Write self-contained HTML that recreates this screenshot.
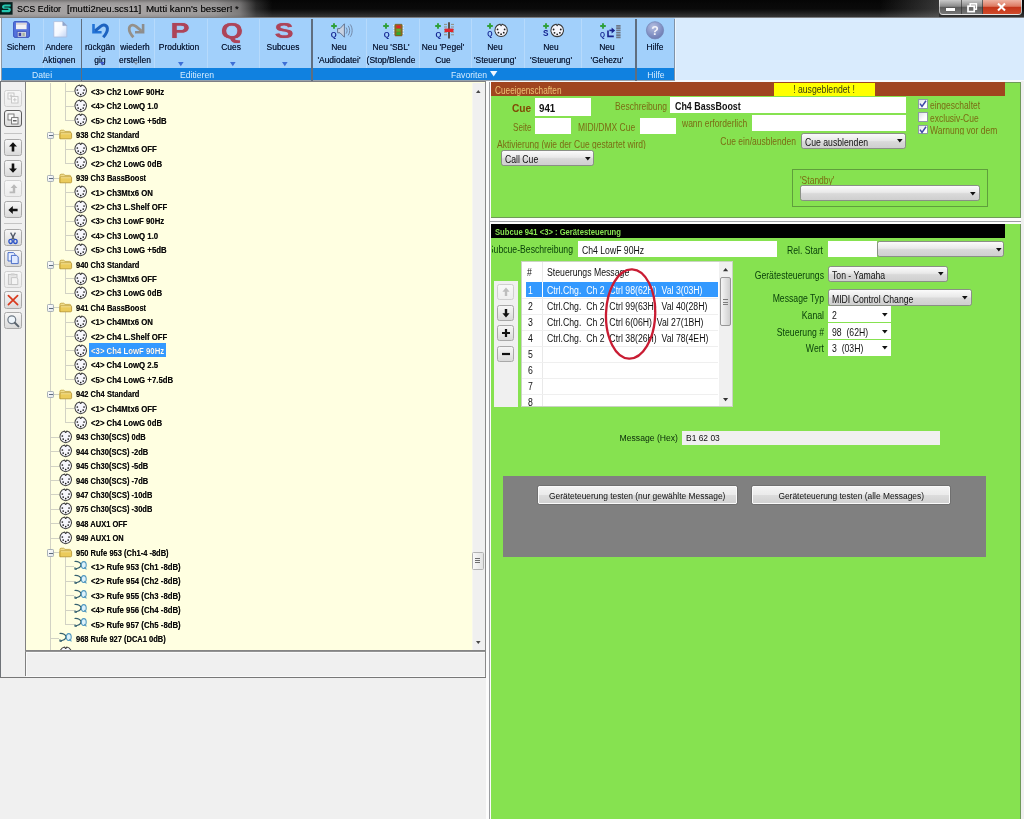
<!DOCTYPE html>
<html lang="de"><head><meta charset="utf-8"><title>SCS Editor</title>
<style>
html,body{margin:0;padding:0}
html{overflow:hidden;width:1024px;height:819px}
body{width:1024px;height:819px;position:relative;overflow:hidden;background:#f0f0f0;font-family:"Liberation Sans",sans-serif;font-size:9.6px;color:#000}
.a{position:absolute}
.t,.tc,.tr{font-size:10.2px}
.t{position:absolute;white-space:pre;transform:scaleX(0.85);transform-origin:0 0;line-height:1}
.tc{position:absolute;white-space:pre;transform:scaleX(0.85);transform-origin:50% 0;line-height:1;text-align:center}
.tr{position:absolute;white-space:pre;transform:scaleX(0.85);transform-origin:100% 0;line-height:1;text-align:right}
.b{font-weight:bold}
.tree{font-size:9.7px;font-weight:bold;color:#0a0a0a;transform:scaleX(.775);text-shadow:0 0 .5px rgba(0,0,0,.55)}
.rl{transform:scaleX(.88);font-size:9.6px;color:#0a1834;text-shadow:0 0 .45px rgba(10,24,52,.75)}
.band{transform:scaleX(.9);font-size:9.6px;color:#d4ecff}
.br{color:#7a6c14;transform:scaleX(.835);text-shadow:none}
.dg{color:#0a420a}
.sel{background:linear-gradient(#fbfbfb,#e9e9e9 45%,#d9d9d9 55%,#cfcfcf);border:1px solid #8a8f86;border-radius:2.5px;box-sizing:border-box}
.tbtn{position:absolute;left:4.2px;width:17.4px;height:17.2px;box-sizing:border-box;border:1px solid #a9a9a9;border-radius:2.5px;background:linear-gradient(#f6f6f6,#e9e9e9 50%,#dadada)}
.tbtn.dis{border-color:#d0d0d0;background:linear-gradient(#f7f7f7,#ececec)}
.lbtn{position:absolute;left:497.3px;width:17.2px;height:16.2px;box-sizing:border-box;border:1px solid #a9a9a9;border-radius:2.5px;background:linear-gradient(#f6f6f6,#e9e9e9 50%,#dadada)}
svg{position:absolute;overflow:visible}
#clip{position:absolute;left:0;top:0;width:1024px;height:819px;overflow:hidden}
#app{position:absolute;left:0;top:0;width:1024px;height:819px;will-change:transform;filter:blur(.4px)}
</style></head>
<body>
<div id="clip">
<div id="app">
<!-- title bar -->
<div class="a " style="left:-6px;top:-6px;width:1036px;height:831px;background:#f0f0f0"></div>
<div class="a " style="left:-6px;top:-6px;width:1036px;height:8px;background:#060606"></div>
<div class="a " style="left:-6px;top:0px;width:1036px;height:17.5px;background:linear-gradient(to bottom,#060606 0,#0a0a0a 9px,#222 13.5px,#3a3a3a 17px)"></div>
<div class="a " style="left:-6px;top:-6px;width:296px;height:23.5px;background:linear-gradient(to right,#a3a0a0 0,#a5a2a2 156px,#9a9898 221px,rgba(150,148,148,.78) 246px,rgba(120,120,120,.3) 262px,rgba(100,100,100,0) 278px)"></div>
<div class="a " style="left:-6px;top:-6px;width:1036px;height:6px;background:rgba(0,0,0,.28)"></div>
<div class="a " style="left:-6px;top:0px;width:1036px;height:17.5px;background:linear-gradient(to bottom,rgba(0,0,0,.28) 0,rgba(0,0,0,.05) 3px,rgba(0,0,0,0) 6px,rgba(0,0,0,0) 14px,rgba(0,0,0,.12) 17.5px)"></div>
<div class="a " style="left:-6px;top:16.6px;width:1036px;height:1.4px;background:#7d7f82"></div>
<svg class="a" style="left:0;top:2px" width="12.6" height="12.8" viewBox="0 0 16 16"><rect width="16" height="16" fill="#06201f"/><path d="M13.5 3.2 H6.5 C3.8 3.2 2.6 4.6 2.6 6.1 C2.6 7.6 3.8 8.4 5.6 8.4 H10 C10.6 8.4 10.9 8.7 10.9 9.2 C10.9 9.8 10.5 10 9.8 10 H2.2 V13 H10.2 C12.6 13 13.8 11.4 13.8 9.6 C13.8 7.9 12.6 6.9 10.6 6.9 H6.2 C5.7 6.9 5.4 6.6 5.4 6.2 C5.4 5.8 5.8 5.6 6.3 5.6 H13.5 Z" fill="#22c7b1"/></svg>
<span class="t " style="left:17.4px;top:3.9px;font-size:9.4px;color:#0c0c0c;text-shadow:0 0 .5px rgba(0,0,0,.6);transform:scaleX(.95)">SCS Editor</span>
<span class="t " style="left:66.6px;top:3.9px;font-size:9.4px;color:#0c0c0c;text-shadow:0 0 .5px rgba(0,0,0,.6);transform:scaleX(1.02)">[mutti2neu.scs11]</span>
<span class="t " style="left:146.3px;top:3.9px;font-size:9.4px;color:#0c0c0c;text-shadow:0 0 .5px rgba(0,0,0,.6);transform:scaleX(1.04)">Mutti kann's besser! *</span>
<div class="a " style="left:938.6px;top:-1px;width:83.4px;height:15.6px;border:1px solid rgba(255,255,255,.55);border-radius:0 0 4px 4px;box-sizing:border-box;overflow:hidden;background:linear-gradient(#c9c9c9,#8b8b8b 45%,#5b5b5b 52%,#777)"></div>
<div class="a " style="left:880px;top:0px;width:59px;height:16.5px;background:linear-gradient(to right,rgba(130,130,130,0),rgba(130,130,130,.38))"></div>
<div class="a " style="left:982.6px;top:0px;width:38.4px;height:13.6px;border-radius:0 0 3px 0;background:linear-gradient(#eeb3a3,#dd7a62 45%,#c4351a 52%,#cf4a2a)"></div>
<div class="a " style="left:960.5px;top:0px;width:1px;height:13.6px;background:rgba(40,40,40,.6)"></div>
<div class="a " style="left:982px;top:0px;width:1px;height:13.6px;background:rgba(40,40,40,.6)"></div>
<div class="a " style="left:946px;top:8.2px;width:8.6px;height:2.6px;background:#fff;box-shadow:0 0 1px #333"></div>
<svg class="a" style="left:966.5px;top:2.5px" width="11" height="10" viewBox="0 0 11 10"><rect x="3.2" y="0.8" width="6.2" height="5.4" fill="none" stroke="#fff" stroke-width="1.5"/><rect x="1" y="3.2" width="6.2" height="5.4" fill="#6b6b6b" stroke="#fff" stroke-width="1.7"/></svg>
<svg class="a" style="left:996.5px;top:3.2px" width="9" height="8" viewBox="0 0 9 8"><path d="M1 0.6 L8 7.4 M8 0.6 L1 7.4" stroke="#fff" stroke-width="2.1" stroke-linecap="butt"/></svg>
<!-- ribbon -->
<div class="a " style="left:-6px;top:18px;width:1036px;height:63.4px;background:#d9ebfd"></div>
<div class="a " style="left:-6px;top:79.9px;width:1036px;height:2.2px;background:#f6f9fc"></div>
<div class="a " style="left:2px;top:18px;width:673px;height:50.4px;background:#a2d0fb"></div>
<div class="a " style="left:2px;top:68.3px;width:673px;height:11.6px;background:#1081e0"></div>
<div class="a " style="left:2px;top:79.9px;width:673px;height:1.1px;background:#96a1ad"></div>
<div class="a " style="left:0px;top:18px;width:1.2px;height:64px;background:#f4f6f8"></div>
<div class="a " style="left:1.3px;top:18px;width:0.9px;height:64px;background:#8c98a5"></div>
<div class="a " style="left:80.5px;top:18.6px;width:1.6px;height:62px;background:#5f6e7f"></div>
<div class="a " style="left:311.4px;top:18.6px;width:1.6px;height:62px;background:#5f6e7f"></div>
<div class="a " style="left:635.4000000000001px;top:18.6px;width:1.6px;height:62px;background:#5f6e7f"></div>
<div class="a " style="left:674.4px;top:18.6px;width:0.9px;height:61.5px;background:#7f92a8"></div>
<div class="a " style="left:675.3px;top:18.6px;width:1px;height:61.5px;background:#eef5fc"></div>
<div class="a " style="left:42.5px;top:19px;width:1px;height:49px;background:rgba(255,255,255,.22)"></div>
<div class="a " style="left:118.5px;top:19px;width:1px;height:49px;background:rgba(255,255,255,.22)"></div>
<div class="a " style="left:153.5px;top:19px;width:1px;height:49px;background:rgba(255,255,255,.22)"></div>
<div class="a " style="left:206.5px;top:19px;width:1px;height:49px;background:rgba(255,255,255,.22)"></div>
<div class="a " style="left:258.5px;top:19px;width:1px;height:49px;background:rgba(255,255,255,.22)"></div>
<div class="a " style="left:365.5px;top:19px;width:1px;height:49px;background:rgba(255,255,255,.22)"></div>
<div class="a " style="left:418.5px;top:19px;width:1px;height:49px;background:rgba(255,255,255,.22)"></div>
<div class="a " style="left:470.5px;top:19px;width:1px;height:49px;background:rgba(255,255,255,.22)"></div>
<div class="a " style="left:523.5px;top:19px;width:1px;height:49px;background:rgba(255,255,255,.22)"></div>
<div class="a " style="left:580.5px;top:19px;width:1px;height:49px;background:rgba(255,255,255,.22)"></div>
<span class="tc rl" style="left:-39.2px;width:120px;top:42.3px;">Sichern</span>
<span class="tc rl" style="left:-0.7000000000000028px;width:120px;top:42.3px;">Andere</span>
<span class="tc rl" style="left:-0.7000000000000028px;width:120px;top:55.2px;">Aktionen</span>
<span class="tc rl" style="left:39.8px;width:120px;top:42.3px;">rückgän</span>
<span class="tc rl" style="left:39.8px;width:120px;top:55.2px;">gig</span>
<span class="tc rl" style="left:75.19999999999999px;width:120px;top:42.3px;">wiederh</span>
<span class="tc rl" style="left:75.19999999999999px;width:120px;top:55.2px;">erstellen</span>
<span class="tc rl" style="left:119.30000000000001px;width:120px;top:42.3px;">Produktion</span>
<span class="tc rl" style="left:171.0px;width:120px;top:42.3px;">Cues</span>
<span class="tc rl" style="left:222.8px;width:120px;top:42.3px;">Subcues</span>
<span class="tc rl" style="left:279.0px;width:120px;top:42.3px;">Neu</span>
<span class="tc rl" style="left:279.0px;width:120px;top:55.2px;">'Audiodatei'</span>
<span class="tc rl" style="left:330.7px;width:120px;top:42.3px;">Neu 'SBL'</span>
<span class="tc rl" style="left:330.7px;width:120px;top:55.2px;">(Stop/Blende</span>
<span class="tc rl" style="left:383.0px;width:120px;top:42.3px;">Neu 'Pegel'</span>
<span class="tc rl" style="left:383.0px;width:120px;top:55.2px;">Cue</span>
<span class="tc rl" style="left:434.7px;width:120px;top:42.3px;">Neu</span>
<span class="tc rl" style="left:434.7px;width:120px;top:55.2px;">'Steuerung'</span>
<span class="tc rl" style="left:490.70000000000005px;width:120px;top:42.3px;">Neu</span>
<span class="tc rl" style="left:490.70000000000005px;width:120px;top:55.2px;">'Steuerung'</span>
<span class="tc rl" style="left:546.6px;width:120px;top:42.3px;">Neu</span>
<span class="tc rl" style="left:546.6px;width:120px;top:55.2px;">'Gehezu'</span>
<span class="tc rl" style="left:594.6px;width:120px;top:42.3px;">Hilfe</span>
<span class="tc band" style="left:-18.4px;width:120px;top:69.6px;">Datei</span>
<span class="tc band" style="left:137.4px;width:120px;top:69.6px;">Editieren</span>
<span class="tr band" style="left:286.8px;width:200px;top:69.6px;">Favoriten</span>
<span class="tc band" style="left:596.0px;width:120px;top:69.6px;">Hilfe</span>
<svg class="a" style="left:489.90000000000003px;top:71.0px" width="7.4" height="5.6" viewBox="0 0 10 10" preserveAspectRatio="none"><path d="M0 0H10L5 10Z" fill="#f2f8ff"/></svg>
<svg class="a" style="left:178.0px;top:61.699999999999996px" width="5.6" height="4.2" viewBox="0 0 10 10" preserveAspectRatio="none"><path d="M0 0H10L5 10Z" fill="#3d6fd6"/></svg>
<svg class="a" style="left:229.6px;top:61.699999999999996px" width="5.6" height="4.2" viewBox="0 0 10 10" preserveAspectRatio="none"><path d="M0 0H10L5 10Z" fill="#3d6fd6"/></svg>
<svg class="a" style="left:281.8px;top:61.699999999999996px" width="5.6" height="4.2" viewBox="0 0 10 10" preserveAspectRatio="none"><path d="M0 0H10L5 10Z" fill="#3d6fd6"/></svg>
<svg class="a" style="left:57.5px;top:60.800000000000004px" width="4.6" height="3.6" viewBox="0 0 10 10" preserveAspectRatio="none"><path d="M0 0H10L5 10Z" fill="#3d55b8"/></svg>
<svg class="a" style="left:100.0px;top:61.6px" width="4.6" height="3.6" viewBox="0 0 10 10" preserveAspectRatio="none"><path d="M0 0H10L5 10Z" fill="#3d55c8"/></svg>
<svg class="a" style="left:134.3px;top:61.8px" width="4.0" height="3.2" viewBox="0 0 10 10" preserveAspectRatio="none"><path d="M0 0H10L5 10Z" fill="#8a97a8"/></svg>
<span class="tc b" style="left:160px;width:40px;top:20.4px;font-size:22px;color:#ad4459;transform:scaleX(1.3);text-shadow:0 0 .6px #ad4459">P</span>
<span class="tc b" style="left:212px;width:40px;top:20.4px;font-size:22px;color:#ad4459;transform:scaleX(1.3);text-shadow:0 0 .6px #ad4459">Q</span>
<span class="tc b" style="left:264.4px;width:40px;top:20.4px;font-size:22px;color:#ad4459;transform:scaleX(1.3);text-shadow:0 0 .6px #ad4459">S</span>
<svg style="left:12.8px;top:21px" width="17" height="17" viewBox="0 0 17 17"><path d="M1.6 0.6H14.2L16.4 2.8V15C16.4 15.8 15.8 16.4 15 16.4H2C1.2 16.4 .6 15.8 .6 15V1.6C.6 1 1 .6 1.6 .6Z" fill="#5472dc" stroke="#3b57c0" stroke-width="1"/><rect x="3" y="1.8" width="10.6" height="6.4" fill="#f1f1f4"/><rect x="3" y="1.8" width="10.6" height="2" fill="#d9d3d6"/><rect x="4.2" y="10.6" width="9.4" height="5.6" fill="#d6dae2" stroke="#3f55b8" stroke-width=".8"/><rect x="5.6" y="11.8" width="2.6" height="3.2" fill="#3e3fa2"/><rect x="9.4" y="11.8" width="2.4" height="3.2" fill="#a7b39f"/></svg>
<svg style="left:53px;top:21.4px" width="14.4" height="16.6" viewBox="0 0 14.4 16.6"><defs><linearGradient id="pg" x1="0" y1="0" x2="1" y2="1"><stop offset="0" stop-color="#ffffff"/><stop offset=".55" stop-color="#f4f8ff"/><stop offset="1" stop-color="#c2d4f4"/></linearGradient></defs><path d="M.8 .6H9.8L13.8 4.6V16H.8Z" fill="url(#pg)" stroke="#a9bbdc" stroke-width=".8"/><path d="M9.8 .6V4.6H13.8Z" fill="#8fa6cf" stroke="#8ea3c8" stroke-width=".6"/></svg>
<svg style="left:92.2px;top:23.1px" width="17" height="16" viewBox="0 0 17 16"><path d="M1.5 1V9.3H9.6" fill="none" stroke="#2272d6" stroke-width="2.6"/><path d="M3 8L8.6 3.4C11.6 1 15.2 2 15.4 5.6C15.6 8.8 13.4 11.8 11.2 14.2" fill="none" stroke="#1d62c0" stroke-width="3" stroke-linecap="butt"/></svg>
<svg style="left:128.1px;top:23.1px" width="17" height="16" viewBox="0 0 17 16"><g transform="translate(16.6 0) scale(-1 1)"><path d="M1.5 1V9.3H9.6" fill="none" stroke="#8d8d8d" stroke-width="2.6"/><path d="M3 8L8.6 3.4C11.6 1 15.2 2 15.4 5.6C15.6 8.8 13.4 11.8 11.2 14.2" fill="none" stroke="#959089" stroke-width="2.8" stroke-linecap="butt"/></g></svg>
<svg style="left:330.6px;top:22.8px" width="6" height="6" viewBox="0 0 6 6"><path d="M3 .2V5.8M.2 3H5.8" stroke="#2fa03a" stroke-width="1.9"/></svg>
<span class="t b" style="left:330.8px;top:30.6px;font-size:7.6px;color:#10208e;transform:scaleX(1)">Q</span>
<svg style="left:336.6px;top:22.6px" width="16" height="15.4" viewBox="0 0 16 15.4"><path d="M.6 5.6H3L7.4 .8V14.2L3 9.8H.6Z" fill="#c8d2e2" stroke="#5a6a86" stroke-width=".9"/><path d="M9.2 4.6C10.4 6.4 10.4 8.8 9.2 10.6M11.2 2.8C13.2 5.6 13.2 9.6 11.2 12.4M13.2 1.4C15.8 5 15.8 10.2 13.2 13.8" fill="none" stroke="#6d7f9c" stroke-width=".9"/></svg>
<svg style="left:383.4px;top:22.8px" width="6" height="6" viewBox="0 0 6 6"><path d="M3 .2V5.8M.2 3H5.8" stroke="#2fa03a" stroke-width="1.9"/></svg>
<span class="t b" style="left:383.8px;top:30.6px;font-size:7.6px;color:#10208e;transform:scaleX(1)">Q</span>
<svg style="left:392.6px;top:24.4px" width="11" height="12.2" viewBox="0 0 11 12.2"><path d="M0 1.6H2M0 4.2H2M0 6.8H2M0 9.4H2M9 1.6H11M9 4.2H11M9 6.8H11M9 9.4H11" stroke="#f4f4f4" stroke-width="1"/><rect x="1.8" y=".3" width="7.4" height="11.6" rx=".8" fill="#8c6d1f" stroke="#6b5317" stroke-width=".6"/><rect x="3.4" y="1.4" width="4.2" height="2.8" fill="#e0242a"/><rect x="3.4" y="4.9" width="4.2" height="2.6" fill="#5fae2a"/><rect x="3.4" y="8.2" width="4.2" height="2.8" fill="#2fa92f"/></svg>
<svg style="left:434.9px;top:22.8px" width="6" height="6" viewBox="0 0 6 6"><path d="M3 .2V5.8M.2 3H5.8" stroke="#2fa03a" stroke-width="1.9"/></svg>
<span class="t b" style="left:435.4px;top:30.6px;font-size:7.6px;color:#10208e;transform:scaleX(1)">Q</span>
<svg style="left:443.2px;top:21.8px" width="12" height="16.6" viewBox="0 0 12 16.6"><path d="M1 2.4H4M1 5H4M1 7.6H4M1 10.2H4M1 12.8H4M8 2.4H11M8 5H11M8 7.6H11M8 10.2H11M8 12.8H11" stroke="#8d8772" stroke-width=".9"/><path d="M6 .2V16.4" stroke="#4b3a30" stroke-width="1.7"/><rect x="1.6" y="6.6" width="8.8" height="3.4" fill="#e0262c"/></svg>
<svg style="left:486.8px;top:23.3px" width="6" height="6" viewBox="0 0 6 6"><path d="M3 .2V5.8M.2 3H5.8" stroke="#2fa03a" stroke-width="1.9"/></svg>
<span class="t b" style="left:487.2px;top:31.4px;font-size:6.8px;color:#10208e;transform:scaleX(1)">Q</span>
<svg style="left:494.4px;top:22.6px" width="14.2" height="14.2" viewBox="0 0 16 16"><path d="M6.7 1.3L8 3.1L9.3 1.3A7 7 0 1 1 6.7 1.3Z" fill="#f6f6fc" stroke="#3a3a3a" stroke-width="1.2" stroke-linejoin="round"/><g fill="#1c1c1c"><circle cx="4" cy="7.2" r="1"/><circle cx="12" cy="7.2" r="1"/><circle cx="5" cy="10.9" r="1"/><circle cx="11" cy="10.9" r="1"/><circle cx="8" cy="12.6" r="1"/></g></svg>
<svg style="left:542.6px;top:23.3px" width="6" height="6" viewBox="0 0 6 6"><path d="M3 .2V5.8M.2 3H5.8" stroke="#2fa03a" stroke-width="1.9"/></svg>
<span class="t b" style="left:543px;top:30.4px;font-size:8.2px;color:#10208e;transform:scaleX(1)">S</span>
<svg style="left:550px;top:22.6px" width="14.4" height="14.4" viewBox="0 0 16 16"><path d="M6.7 1.3L8 3.1L9.3 1.3A7 7 0 1 1 6.7 1.3Z" fill="#f6f6fc" stroke="#3a3a3a" stroke-width="1.2" stroke-linejoin="round"/><g fill="#1c1c1c"><circle cx="4" cy="7.2" r="1"/><circle cx="12" cy="7.2" r="1"/><circle cx="5" cy="10.9" r="1"/><circle cx="11" cy="10.9" r="1"/><circle cx="8" cy="12.6" r="1"/></g></svg>
<svg style="left:599.6px;top:23.3px" width="6" height="6" viewBox="0 0 6 6"><path d="M3 .2V5.8M.2 3H5.8" stroke="#2fa03a" stroke-width="1.9"/></svg>
<span class="t b" style="left:600px;top:31.6px;font-size:6.4px;color:#10208e;transform:scaleX(1)">Q</span>
<svg style="left:606.6px;top:27.4px" width="8.6" height="10.4" viewBox="0 0 8.6 10.4"><path d="M1 3.6V9.4H6.8" fill="none" stroke="#18228c" stroke-width="1.6"/><path d="M2.4 3.4H5.4" stroke="#18228c" stroke-width="1.6"/><path d="M4.6 .4L8.2 3.4L4.6 6.4Z" fill="#18228c"/></svg>
<svg style="left:615.6px;top:24.8px" width="4.8" height="13.8" viewBox="0 0 4.8 13.8"><path d="M2.4 0V13.8" stroke="#6f7887" stroke-width="4.4" stroke-dasharray="1.7 .6"/></svg>
<svg style="left:645.8px;top:20.8px" width="18" height="18.6" viewBox="0 0 18 18.6"><defs><radialGradient id="hg" cx=".4" cy=".3" r=".8"><stop offset="0" stop-color="#b5bfe0"/><stop offset=".6" stop-color="#8391c4"/><stop offset="1" stop-color="#6775ad"/></radialGradient></defs><circle cx="9" cy="9.3" r="8.6" fill="url(#hg)" stroke="#7686b6" stroke-width=".8"/></svg>
<span class="tc b" style="left:644.8px;width:20px;top:23.6px;font-size:13.4px;color:#f4f4fa;transform:scaleX(.92)">?</span>
<!-- left pane -->
<div class="a " style="left:-6px;top:81px;width:7px;height:597.4px;background:#6f7378"></div>
<div class="a " style="left:25px;top:82px;width:461px;height:569px;background:#ffffe1"></div>
<div class="a " style="left:0.6px;top:81px;width:485.4px;height:1.4px;background:#7e8084"></div>
<div class="a " style="left:24.9px;top:82px;width:1.2px;height:594px;background:#808080"></div>
<div class="a " style="left:26.1px;top:652.2px;width:459px;height:24.6px;background:#f0f0f0;box-sizing:border-box;border:solid #fafafa;border-width:1px 0 1.4px 1px"></div>
<div class="a " style="left:484.6px;top:82px;width:1.3px;height:596px;background:#8a8a8a"></div>
<div class="a " style="left:25px;top:650.1px;width:460px;height:2px;background:linear-gradient(#7d7d7d,#9a9a9a)"></div>
<div class="a " style="left:-6px;top:677px;width:492.2px;height:1.4px;background:#777"></div>
<div class="a " style="left:485.8px;top:82px;width:5.5px;height:740px;background:#fcfcfc"></div>
<div class="a " style="left:489.1px;top:82px;width:1.2px;height:740px;background:#9c9ea2"></div>
<div class="a " style="left:472.2px;top:83px;width:12.4px;height:567px;background:#f0f0f0"></div>
<div class="a " style="left:471.6px;top:83px;width:0.7px;height:567px;background:#f7f7ef"></div>
<svg class="a" style="left:476.09999999999997px;top:89.55px" width="4.6" height="2.9" viewBox="0 0 10 10" preserveAspectRatio="none"><path d="M0 10H10L5 0Z" fill="#484848"/></svg>
<svg class="a" style="left:476.09999999999997px;top:640.75px" width="4.6" height="2.9" viewBox="0 0 10 10" preserveAspectRatio="none"><path d="M0 0H10L5 10Z" fill="#484848"/></svg>
<div class="a " style="left:472.2px;top:552px;width:11.8px;height:17.6px;box-sizing:border-box;border:1px solid #b2b2b2;border-radius:1.5px;background:linear-gradient(to right,#f9f9f9,#eeeeee 50%,#e2e2e2)"></div>
<div class="a " style="left:475.4px;top:557.6px;width:4.6px;height:1px;background:#6d6d6d"></div>
<div class="a " style="left:475.4px;top:559.9px;width:4.6px;height:1px;background:#6d6d6d"></div>
<div class="a " style="left:475.4px;top:562.2px;width:4.6px;height:1px;background:#6d6d6d"></div>
<div class="a" style="left:3.6px;top:133.2px;width:18.4px;height:1px;background:#c4c4c4"></div>
<div class="a" style="left:3.6px;top:223.3px;width:18.4px;height:1px;background:#c4c4c4"></div>
<div class="tbtn dis" style="top:89.5px"><svg style="left:-0.3px;top:-0.4px" width="16" height="16" viewBox="0 0 16 16"><rect x="3" y="3" width="6" height="6" fill="#fafafa" stroke="#c2c2c2" stroke-width=".9"/><rect x="6.6" y="6.6" width="6.4" height="6.4" fill="#fafafa" stroke="#c2c2c2" stroke-width=".9"/><path d="M8 9.8H11.6M9.8 8V11.6M4.4 6H7.6M6 4.4V7.6" stroke="#c2c2c2" stroke-width=".9"/></svg></div>
<div class="tbtn" style="top:110.3px;border-color:#5c5c5c;border-radius:3px"><svg style="left:-0.3px;top:-0.4px" width="16" height="16" viewBox="0 0 16 16"><rect x="3" y="3" width="6" height="6" fill="#fafafa" stroke="#707070" stroke-width=".9"/><rect x="6.6" y="6.6" width="6.4" height="6.4" fill="#fafafa" stroke="#707070" stroke-width=".9"/><path d="M8 9.8H11.6" stroke="#303030" stroke-width="1.1"/></svg></div>
<div class="tbtn" style="top:138.7px"><svg style="left:-0.3px;top:-0.4px" width="16" height="16" viewBox="0 0 16 16"><path d="M8 3.2L12 7.6H9.3V12.4H6.7V7.6H4Z" fill="#111"/></svg></div>
<div class="tbtn" style="top:159.5px"><svg style="left:-0.3px;top:-0.4px" width="16" height="16" viewBox="0 0 16 16"><path d="M8 12.8L12 8.4H9.3V3.6H6.7V8.4H4Z" fill="#111"/></svg></div>
<div class="tbtn dis" style="top:180.3px"><svg style="left:-0.3px;top:-0.4px" width="16" height="16" viewBox="0 0 16 16"><path d="M9 3.2L12.4 7H10.2V12.2H4.6V10.4H7.8V7H5.6Z" fill="#b9b9b9"/></svg></div>
<div class="tbtn" style="top:201.1px"><svg style="left:-0.3px;top:-0.4px" width="16" height="16" viewBox="0 0 16 16"><path d="M3.4 8L7.8 4V6.7H12.6V9.3H7.8V12Z" fill="#111"/></svg></div>
<div class="tbtn" style="top:229.0px"><svg style="left:-0.3px;top:-0.4px" width="16" height="16" viewBox="0 0 16 16"><path d="M5.6 2.6L9.3 9.6M10.4 2.6L6.7 9.6" stroke="#50586a" stroke-width="1.3" fill="none"/><ellipse cx="5.6" cy="11.4" rx="1.7" ry="2.1" fill="none" stroke="#2a52c8" stroke-width="1.3"/><ellipse cx="10.4" cy="11.4" rx="1.7" ry="2.1" fill="none" stroke="#2a52c8" stroke-width="1.3"/></svg></div>
<div class="tbtn" style="top:249.8px"><svg style="left:-0.3px;top:-0.4px" width="16" height="16" viewBox="0 0 16 16"><path d="M3 2.6H8.4L10 4.2V11H3Z" fill="#eaf1ff" stroke="#3b62c4" stroke-width=".9"/><path d="M6.4 5.4H11.6L13.2 7V13.6H6.4Z" fill="#dfe9ff" stroke="#3b62c4" stroke-width=".9"/></svg></div>
<div class="tbtn dis" style="top:270.6px"><svg style="left:-0.3px;top:-0.4px" width="16" height="16" viewBox="0 0 16 16"><rect x="3.4" y="3.4" width="8.6" height="10" fill="#e6e6e6" stroke="#c0c0c0" stroke-width=".9"/><rect x="5.8" y="2.4" width="3.8" height="2" fill="#d0d0d0"/><path d="M6.4 6.6H11.4L12.8 8V13.6H6.4Z" fill="#f4f4f4" stroke="#bdbdbd" stroke-width=".8"/></svg></div>
<div class="tbtn" style="top:291.4px"><svg style="left:-0.3px;top:-0.4px" width="16" height="16" viewBox="0 0 16 16"><path d="M3.4 3.6L12.6 12.6M12.6 3.6L3.4 12.6" stroke="#d83a1e" stroke-width="1.7" stroke-linecap="round"/></svg></div>
<div class="tbtn" style="top:312.2px"><svg style="left:-0.3px;top:-0.4px" width="16" height="16" viewBox="0 0 16 16"><circle cx="6.8" cy="6.8" r="3.9" fill="#eef5fb" stroke="#6f7a86" stroke-width="1.2"/><path d="M9.8 9.8L13.4 13.4" stroke="#5a646e" stroke-width="2" stroke-linecap="round"/></svg></div>
<div class="a" style="left:25.6px;top:82.9px;width:446px;height:567.2px;overflow:hidden">
<div class="a" style="left:24.70px;top:0.10px;width:0.9px;height:570px;background:#d2d2c4"></div>
<div class="a" style="left:39.60px;top:0.10px;width:0.9px;height:37.8px;background:#d2d2c4"></div>
<div class="a" style="left:39.60px;top:56.80px;width:0.9px;height:24.299999999999983px;background:#d2d2c4"></div>
<div class="a" style="left:39.60px;top:100.00px;width:0.9px;height:67.49999999999997px;background:#d2d2c4"></div>
<div class="a" style="left:39.60px;top:186.40px;width:0.9px;height:24.299999999999955px;background:#d2d2c4"></div>
<div class="a" style="left:39.60px;top:229.60px;width:0.9px;height:67.5px;background:#d2d2c4"></div>
<div class="a" style="left:39.60px;top:316.00px;width:0.9px;height:24.299999999999955px;background:#d2d2c4"></div>
<div class="a" style="left:39.60px;top:474.40px;width:0.9px;height:67.50000000000011px;background:#d2d2c4"></div>
<div class="a" style="left:39.60px;top:8.40px;width:9.2px;height:0.9px;background:#d2d2c4"></div>
<svg style="left:48.60px;top:1.60px" width="13.4" height="13.4" viewBox="0 0 16 16"><path d="M6.7 1.3L8 3.1L9.3 1.3A7 7 0 1 1 6.7 1.3Z" fill="#f6f6fc" stroke="#3a3a3a" stroke-width="1.2" stroke-linejoin="round"/><g fill="#1c1c1c"><circle cx="4" cy="7.2" r="1"/><circle cx="12" cy="7.2" r="1"/><circle cx="5" cy="10.9" r="1"/><circle cx="11" cy="10.9" r="1"/><circle cx="8" cy="12.6" r="1"/></g></svg>
<span class="t tree" style="left:65.90px;top:3.85px;transform:scaleX(.805)">&lt;3&gt; Ch2 LowF 90Hz</span>
<div class="a" style="left:39.60px;top:22.80px;width:9.2px;height:0.9px;background:#d2d2c4"></div>
<svg style="left:48.60px;top:16.00px" width="13.4" height="13.4" viewBox="0 0 16 16"><path d="M6.7 1.3L8 3.1L9.3 1.3A7 7 0 1 1 6.7 1.3Z" fill="#f6f6fc" stroke="#3a3a3a" stroke-width="1.2" stroke-linejoin="round"/><g fill="#1c1c1c"><circle cx="4" cy="7.2" r="1"/><circle cx="12" cy="7.2" r="1"/><circle cx="5" cy="10.9" r="1"/><circle cx="11" cy="10.9" r="1"/><circle cx="8" cy="12.6" r="1"/></g></svg>
<span class="t tree" style="left:65.90px;top:18.25px;transform:scaleX(.805)">&lt;4&gt; Ch2 LowQ 1.0</span>
<div class="a" style="left:39.60px;top:37.20px;width:9.2px;height:0.9px;background:#d2d2c4"></div>
<svg style="left:48.60px;top:30.40px" width="13.4" height="13.4" viewBox="0 0 16 16"><path d="M6.7 1.3L8 3.1L9.3 1.3A7 7 0 1 1 6.7 1.3Z" fill="#f6f6fc" stroke="#3a3a3a" stroke-width="1.2" stroke-linejoin="round"/><g fill="#1c1c1c"><circle cx="4" cy="7.2" r="1"/><circle cx="12" cy="7.2" r="1"/><circle cx="5" cy="10.9" r="1"/><circle cx="11" cy="10.9" r="1"/><circle cx="8" cy="12.6" r="1"/></g></svg>
<span class="t tree" style="left:65.90px;top:32.65px;transform:scaleX(.805)">&lt;5&gt; Ch2 LowG +5dB</span>
<div class="a" style="left:28.60px;top:51.60px;width:5px;height:0.9px;background:#d2d2c4"></div>
<div class="a" style="left:21.50px;top:48.80px;width:7.4px;height:7.4px;box-sizing:border-box;border:0.9px solid #a9b1b8;border-radius:1.2px;background:linear-gradient(135deg,#fff,#e2e6ea)"></div>
<div class="a" style="left:23.30px;top:52.10px;width:3.8px;height:0.9px;background:#5c6b7c"></div>
<svg style="left:33.40px;top:46.50px" width="13.4" height="10.8" viewBox="0 0 17 15" preserveAspectRatio="none"><path d="M1.2 13.4V3.2C1.2 2.3 1.8 1.7 2.7 1.7H6.1L7.6 3.3H13.6C14.4 3.3 14.9 3.8 14.9 4.6V5.4" fill="#f0dd8c" stroke="#bb992f" stroke-width="1"/><path d="M1.2 13.6V6.6C1.2 5.9 1.7 5.4 2.4 5.4H14.9C15.6 5.4 16 5.9 16 6.6V12.2C16 13 15.5 13.6 14.7 13.6Z" fill="#ebcb5b" stroke="#b08c25" stroke-width="1"/><path d="M2.2 6.6H15" stroke="#f8eaa6" stroke-width="1"/></svg>
<span class="t tree" style="left:50.20px;top:47.05px">938 Ch2 Standard</span>
<div class="a" style="left:39.60px;top:66.00px;width:9.2px;height:0.9px;background:#d2d2c4"></div>
<svg style="left:48.60px;top:59.20px" width="13.4" height="13.4" viewBox="0 0 16 16"><path d="M6.7 1.3L8 3.1L9.3 1.3A7 7 0 1 1 6.7 1.3Z" fill="#f6f6fc" stroke="#3a3a3a" stroke-width="1.2" stroke-linejoin="round"/><g fill="#1c1c1c"><circle cx="4" cy="7.2" r="1"/><circle cx="12" cy="7.2" r="1"/><circle cx="5" cy="10.9" r="1"/><circle cx="11" cy="10.9" r="1"/><circle cx="8" cy="12.6" r="1"/></g></svg>
<span class="t tree" style="left:65.90px;top:61.45px;transform:scaleX(.805)">&lt;1&gt; Ch2Mtx6 OFF</span>
<div class="a" style="left:39.60px;top:80.40px;width:9.2px;height:0.9px;background:#d2d2c4"></div>
<svg style="left:48.60px;top:73.60px" width="13.4" height="13.4" viewBox="0 0 16 16"><path d="M6.7 1.3L8 3.1L9.3 1.3A7 7 0 1 1 6.7 1.3Z" fill="#f6f6fc" stroke="#3a3a3a" stroke-width="1.2" stroke-linejoin="round"/><g fill="#1c1c1c"><circle cx="4" cy="7.2" r="1"/><circle cx="12" cy="7.2" r="1"/><circle cx="5" cy="10.9" r="1"/><circle cx="11" cy="10.9" r="1"/><circle cx="8" cy="12.6" r="1"/></g></svg>
<span class="t tree" style="left:65.90px;top:75.85px;transform:scaleX(.805)">&lt;2&gt; Ch2 LowG 0dB</span>
<div class="a" style="left:28.60px;top:94.80px;width:5px;height:0.9px;background:#d2d2c4"></div>
<div class="a" style="left:21.50px;top:92.00px;width:7.4px;height:7.4px;box-sizing:border-box;border:0.9px solid #a9b1b8;border-radius:1.2px;background:linear-gradient(135deg,#fff,#e2e6ea)"></div>
<div class="a" style="left:23.30px;top:95.30px;width:3.8px;height:0.9px;background:#5c6b7c"></div>
<svg style="left:33.40px;top:89.70px" width="13.4" height="10.8" viewBox="0 0 17 15" preserveAspectRatio="none"><path d="M1.2 13.4V3.2C1.2 2.3 1.8 1.7 2.7 1.7H6.1L7.6 3.3H13.6C14.4 3.3 14.9 3.8 14.9 4.6V5.4" fill="#f0dd8c" stroke="#bb992f" stroke-width="1"/><path d="M1.2 13.6V6.6C1.2 5.9 1.7 5.4 2.4 5.4H14.9C15.6 5.4 16 5.9 16 6.6V12.2C16 13 15.5 13.6 14.7 13.6Z" fill="#ebcb5b" stroke="#b08c25" stroke-width="1"/><path d="M2.2 6.6H15" stroke="#f8eaa6" stroke-width="1"/></svg>
<span class="t tree" style="left:50.20px;top:90.25px">939 Ch3 BassBoost</span>
<div class="a" style="left:39.60px;top:109.20px;width:9.2px;height:0.9px;background:#d2d2c4"></div>
<svg style="left:48.60px;top:102.40px" width="13.4" height="13.4" viewBox="0 0 16 16"><path d="M6.7 1.3L8 3.1L9.3 1.3A7 7 0 1 1 6.7 1.3Z" fill="#f6f6fc" stroke="#3a3a3a" stroke-width="1.2" stroke-linejoin="round"/><g fill="#1c1c1c"><circle cx="4" cy="7.2" r="1"/><circle cx="12" cy="7.2" r="1"/><circle cx="5" cy="10.9" r="1"/><circle cx="11" cy="10.9" r="1"/><circle cx="8" cy="12.6" r="1"/></g></svg>
<span class="t tree" style="left:65.90px;top:104.65px;transform:scaleX(.805)">&lt;1&gt; Ch3Mtx6 ON</span>
<div class="a" style="left:39.60px;top:123.60px;width:9.2px;height:0.9px;background:#d2d2c4"></div>
<svg style="left:48.60px;top:116.80px" width="13.4" height="13.4" viewBox="0 0 16 16"><path d="M6.7 1.3L8 3.1L9.3 1.3A7 7 0 1 1 6.7 1.3Z" fill="#f6f6fc" stroke="#3a3a3a" stroke-width="1.2" stroke-linejoin="round"/><g fill="#1c1c1c"><circle cx="4" cy="7.2" r="1"/><circle cx="12" cy="7.2" r="1"/><circle cx="5" cy="10.9" r="1"/><circle cx="11" cy="10.9" r="1"/><circle cx="8" cy="12.6" r="1"/></g></svg>
<span class="t tree" style="left:65.90px;top:119.05px;transform:scaleX(.805)">&lt;2&gt; Ch3 L.Shelf OFF</span>
<div class="a" style="left:39.60px;top:138.00px;width:9.2px;height:0.9px;background:#d2d2c4"></div>
<svg style="left:48.60px;top:131.20px" width="13.4" height="13.4" viewBox="0 0 16 16"><path d="M6.7 1.3L8 3.1L9.3 1.3A7 7 0 1 1 6.7 1.3Z" fill="#f6f6fc" stroke="#3a3a3a" stroke-width="1.2" stroke-linejoin="round"/><g fill="#1c1c1c"><circle cx="4" cy="7.2" r="1"/><circle cx="12" cy="7.2" r="1"/><circle cx="5" cy="10.9" r="1"/><circle cx="11" cy="10.9" r="1"/><circle cx="8" cy="12.6" r="1"/></g></svg>
<span class="t tree" style="left:65.90px;top:133.45px;transform:scaleX(.805)">&lt;3&gt; Ch3 LowF 90Hz</span>
<div class="a" style="left:39.60px;top:152.40px;width:9.2px;height:0.9px;background:#d2d2c4"></div>
<svg style="left:48.60px;top:145.60px" width="13.4" height="13.4" viewBox="0 0 16 16"><path d="M6.7 1.3L8 3.1L9.3 1.3A7 7 0 1 1 6.7 1.3Z" fill="#f6f6fc" stroke="#3a3a3a" stroke-width="1.2" stroke-linejoin="round"/><g fill="#1c1c1c"><circle cx="4" cy="7.2" r="1"/><circle cx="12" cy="7.2" r="1"/><circle cx="5" cy="10.9" r="1"/><circle cx="11" cy="10.9" r="1"/><circle cx="8" cy="12.6" r="1"/></g></svg>
<span class="t tree" style="left:65.90px;top:147.85px;transform:scaleX(.805)">&lt;4&gt; Ch3 LowQ 1.0</span>
<div class="a" style="left:39.60px;top:166.80px;width:9.2px;height:0.9px;background:#d2d2c4"></div>
<svg style="left:48.60px;top:160.00px" width="13.4" height="13.4" viewBox="0 0 16 16"><path d="M6.7 1.3L8 3.1L9.3 1.3A7 7 0 1 1 6.7 1.3Z" fill="#f6f6fc" stroke="#3a3a3a" stroke-width="1.2" stroke-linejoin="round"/><g fill="#1c1c1c"><circle cx="4" cy="7.2" r="1"/><circle cx="12" cy="7.2" r="1"/><circle cx="5" cy="10.9" r="1"/><circle cx="11" cy="10.9" r="1"/><circle cx="8" cy="12.6" r="1"/></g></svg>
<span class="t tree" style="left:65.90px;top:162.25px;transform:scaleX(.805)">&lt;5&gt; Ch3 LowG +5dB</span>
<div class="a" style="left:28.60px;top:181.20px;width:5px;height:0.9px;background:#d2d2c4"></div>
<div class="a" style="left:21.50px;top:178.40px;width:7.4px;height:7.4px;box-sizing:border-box;border:0.9px solid #a9b1b8;border-radius:1.2px;background:linear-gradient(135deg,#fff,#e2e6ea)"></div>
<div class="a" style="left:23.30px;top:181.70px;width:3.8px;height:0.9px;background:#5c6b7c"></div>
<svg style="left:33.40px;top:176.10px" width="13.4" height="10.8" viewBox="0 0 17 15" preserveAspectRatio="none"><path d="M1.2 13.4V3.2C1.2 2.3 1.8 1.7 2.7 1.7H6.1L7.6 3.3H13.6C14.4 3.3 14.9 3.8 14.9 4.6V5.4" fill="#f0dd8c" stroke="#bb992f" stroke-width="1"/><path d="M1.2 13.6V6.6C1.2 5.9 1.7 5.4 2.4 5.4H14.9C15.6 5.4 16 5.9 16 6.6V12.2C16 13 15.5 13.6 14.7 13.6Z" fill="#ebcb5b" stroke="#b08c25" stroke-width="1"/><path d="M2.2 6.6H15" stroke="#f8eaa6" stroke-width="1"/></svg>
<span class="t tree" style="left:50.20px;top:176.65px">940 Ch3 Standard</span>
<div class="a" style="left:39.60px;top:195.60px;width:9.2px;height:0.9px;background:#d2d2c4"></div>
<svg style="left:48.60px;top:188.80px" width="13.4" height="13.4" viewBox="0 0 16 16"><path d="M6.7 1.3L8 3.1L9.3 1.3A7 7 0 1 1 6.7 1.3Z" fill="#f6f6fc" stroke="#3a3a3a" stroke-width="1.2" stroke-linejoin="round"/><g fill="#1c1c1c"><circle cx="4" cy="7.2" r="1"/><circle cx="12" cy="7.2" r="1"/><circle cx="5" cy="10.9" r="1"/><circle cx="11" cy="10.9" r="1"/><circle cx="8" cy="12.6" r="1"/></g></svg>
<span class="t tree" style="left:65.90px;top:191.05px;transform:scaleX(.805)">&lt;1&gt; Ch3Mtx6 OFF</span>
<div class="a" style="left:39.60px;top:210.00px;width:9.2px;height:0.9px;background:#d2d2c4"></div>
<svg style="left:48.60px;top:203.20px" width="13.4" height="13.4" viewBox="0 0 16 16"><path d="M6.7 1.3L8 3.1L9.3 1.3A7 7 0 1 1 6.7 1.3Z" fill="#f6f6fc" stroke="#3a3a3a" stroke-width="1.2" stroke-linejoin="round"/><g fill="#1c1c1c"><circle cx="4" cy="7.2" r="1"/><circle cx="12" cy="7.2" r="1"/><circle cx="5" cy="10.9" r="1"/><circle cx="11" cy="10.9" r="1"/><circle cx="8" cy="12.6" r="1"/></g></svg>
<span class="t tree" style="left:65.90px;top:205.45px;transform:scaleX(.805)">&lt;2&gt; Ch3 LowG 0dB</span>
<div class="a" style="left:28.60px;top:224.40px;width:5px;height:0.9px;background:#d2d2c4"></div>
<div class="a" style="left:21.50px;top:221.60px;width:7.4px;height:7.4px;box-sizing:border-box;border:0.9px solid #a9b1b8;border-radius:1.2px;background:linear-gradient(135deg,#fff,#e2e6ea)"></div>
<div class="a" style="left:23.30px;top:224.90px;width:3.8px;height:0.9px;background:#5c6b7c"></div>
<svg style="left:33.40px;top:219.30px" width="13.4" height="10.8" viewBox="0 0 17 15" preserveAspectRatio="none"><path d="M1.2 13.4V3.2C1.2 2.3 1.8 1.7 2.7 1.7H6.1L7.6 3.3H13.6C14.4 3.3 14.9 3.8 14.9 4.6V5.4" fill="#f0dd8c" stroke="#bb992f" stroke-width="1"/><path d="M1.2 13.6V6.6C1.2 5.9 1.7 5.4 2.4 5.4H14.9C15.6 5.4 16 5.9 16 6.6V12.2C16 13 15.5 13.6 14.7 13.6Z" fill="#ebcb5b" stroke="#b08c25" stroke-width="1"/><path d="M2.2 6.6H15" stroke="#f8eaa6" stroke-width="1"/></svg>
<span class="t tree" style="left:50.20px;top:219.85px">941 Ch4 BassBoost</span>
<div class="a" style="left:39.60px;top:238.80px;width:9.2px;height:0.9px;background:#d2d2c4"></div>
<svg style="left:48.60px;top:232.00px" width="13.4" height="13.4" viewBox="0 0 16 16"><path d="M6.7 1.3L8 3.1L9.3 1.3A7 7 0 1 1 6.7 1.3Z" fill="#f6f6fc" stroke="#3a3a3a" stroke-width="1.2" stroke-linejoin="round"/><g fill="#1c1c1c"><circle cx="4" cy="7.2" r="1"/><circle cx="12" cy="7.2" r="1"/><circle cx="5" cy="10.9" r="1"/><circle cx="11" cy="10.9" r="1"/><circle cx="8" cy="12.6" r="1"/></g></svg>
<span class="t tree" style="left:65.90px;top:234.25px;transform:scaleX(.805)">&lt;1&gt; Ch4Mtx6 ON</span>
<div class="a" style="left:39.60px;top:253.20px;width:9.2px;height:0.9px;background:#d2d2c4"></div>
<svg style="left:48.60px;top:246.40px" width="13.4" height="13.4" viewBox="0 0 16 16"><path d="M6.7 1.3L8 3.1L9.3 1.3A7 7 0 1 1 6.7 1.3Z" fill="#f6f6fc" stroke="#3a3a3a" stroke-width="1.2" stroke-linejoin="round"/><g fill="#1c1c1c"><circle cx="4" cy="7.2" r="1"/><circle cx="12" cy="7.2" r="1"/><circle cx="5" cy="10.9" r="1"/><circle cx="11" cy="10.9" r="1"/><circle cx="8" cy="12.6" r="1"/></g></svg>
<span class="t tree" style="left:65.90px;top:248.65px;transform:scaleX(.805)">&lt;2&gt; Ch4 L.Shelf OFF</span>
<div class="a" style="left:39.60px;top:267.60px;width:9.2px;height:0.9px;background:#d2d2c4"></div>
<svg style="left:48.60px;top:260.80px" width="13.4" height="13.4" viewBox="0 0 16 16"><path d="M6.7 1.3L8 3.1L9.3 1.3A7 7 0 1 1 6.7 1.3Z" fill="#f6f6fc" stroke="#3a3a3a" stroke-width="1.2" stroke-linejoin="round"/><g fill="#1c1c1c"><circle cx="4" cy="7.2" r="1"/><circle cx="12" cy="7.2" r="1"/><circle cx="5" cy="10.9" r="1"/><circle cx="11" cy="10.9" r="1"/><circle cx="8" cy="12.6" r="1"/></g></svg>
<div class="a" style="left:63.90px;top:260.00px;width:76.8px;height:14.2px;background:#3399ff"></div>
<span class="t tree" style="left:65.90px;top:263.05px;color:#fff;transform:scaleX(.805)">&lt;3&gt; Ch4 LowF 90Hz</span>
<div class="a" style="left:39.60px;top:282.00px;width:9.2px;height:0.9px;background:#d2d2c4"></div>
<svg style="left:48.60px;top:275.20px" width="13.4" height="13.4" viewBox="0 0 16 16"><path d="M6.7 1.3L8 3.1L9.3 1.3A7 7 0 1 1 6.7 1.3Z" fill="#f6f6fc" stroke="#3a3a3a" stroke-width="1.2" stroke-linejoin="round"/><g fill="#1c1c1c"><circle cx="4" cy="7.2" r="1"/><circle cx="12" cy="7.2" r="1"/><circle cx="5" cy="10.9" r="1"/><circle cx="11" cy="10.9" r="1"/><circle cx="8" cy="12.6" r="1"/></g></svg>
<span class="t tree" style="left:65.90px;top:277.45px;transform:scaleX(.805)">&lt;4&gt; Ch4 LowQ 2.5</span>
<div class="a" style="left:39.60px;top:296.40px;width:9.2px;height:0.9px;background:#d2d2c4"></div>
<svg style="left:48.60px;top:289.60px" width="13.4" height="13.4" viewBox="0 0 16 16"><path d="M6.7 1.3L8 3.1L9.3 1.3A7 7 0 1 1 6.7 1.3Z" fill="#f6f6fc" stroke="#3a3a3a" stroke-width="1.2" stroke-linejoin="round"/><g fill="#1c1c1c"><circle cx="4" cy="7.2" r="1"/><circle cx="12" cy="7.2" r="1"/><circle cx="5" cy="10.9" r="1"/><circle cx="11" cy="10.9" r="1"/><circle cx="8" cy="12.6" r="1"/></g></svg>
<span class="t tree" style="left:65.90px;top:291.85px;transform:scaleX(.805)">&lt;5&gt; Ch4 LowG +7.5dB</span>
<div class="a" style="left:28.60px;top:310.80px;width:5px;height:0.9px;background:#d2d2c4"></div>
<div class="a" style="left:21.50px;top:308.00px;width:7.4px;height:7.4px;box-sizing:border-box;border:0.9px solid #a9b1b8;border-radius:1.2px;background:linear-gradient(135deg,#fff,#e2e6ea)"></div>
<div class="a" style="left:23.30px;top:311.30px;width:3.8px;height:0.9px;background:#5c6b7c"></div>
<svg style="left:33.40px;top:305.70px" width="13.4" height="10.8" viewBox="0 0 17 15" preserveAspectRatio="none"><path d="M1.2 13.4V3.2C1.2 2.3 1.8 1.7 2.7 1.7H6.1L7.6 3.3H13.6C14.4 3.3 14.9 3.8 14.9 4.6V5.4" fill="#f0dd8c" stroke="#bb992f" stroke-width="1"/><path d="M1.2 13.6V6.6C1.2 5.9 1.7 5.4 2.4 5.4H14.9C15.6 5.4 16 5.9 16 6.6V12.2C16 13 15.5 13.6 14.7 13.6Z" fill="#ebcb5b" stroke="#b08c25" stroke-width="1"/><path d="M2.2 6.6H15" stroke="#f8eaa6" stroke-width="1"/></svg>
<span class="t tree" style="left:50.20px;top:306.25px">942 Ch4 Standard</span>
<div class="a" style="left:39.60px;top:325.20px;width:9.2px;height:0.9px;background:#d2d2c4"></div>
<svg style="left:48.60px;top:318.40px" width="13.4" height="13.4" viewBox="0 0 16 16"><path d="M6.7 1.3L8 3.1L9.3 1.3A7 7 0 1 1 6.7 1.3Z" fill="#f6f6fc" stroke="#3a3a3a" stroke-width="1.2" stroke-linejoin="round"/><g fill="#1c1c1c"><circle cx="4" cy="7.2" r="1"/><circle cx="12" cy="7.2" r="1"/><circle cx="5" cy="10.9" r="1"/><circle cx="11" cy="10.9" r="1"/><circle cx="8" cy="12.6" r="1"/></g></svg>
<span class="t tree" style="left:65.90px;top:320.65px;transform:scaleX(.805)">&lt;1&gt; Ch4Mtx6 OFF</span>
<div class="a" style="left:39.60px;top:339.60px;width:9.2px;height:0.9px;background:#d2d2c4"></div>
<svg style="left:48.60px;top:332.80px" width="13.4" height="13.4" viewBox="0 0 16 16"><path d="M6.7 1.3L8 3.1L9.3 1.3A7 7 0 1 1 6.7 1.3Z" fill="#f6f6fc" stroke="#3a3a3a" stroke-width="1.2" stroke-linejoin="round"/><g fill="#1c1c1c"><circle cx="4" cy="7.2" r="1"/><circle cx="12" cy="7.2" r="1"/><circle cx="5" cy="10.9" r="1"/><circle cx="11" cy="10.9" r="1"/><circle cx="8" cy="12.6" r="1"/></g></svg>
<span class="t tree" style="left:65.90px;top:335.05px;transform:scaleX(.805)">&lt;2&gt; Ch4 LowG 0dB</span>
<div class="a" style="left:24.70px;top:354.00px;width:8.6px;height:0.9px;background:#d2d2c4"></div>
<svg style="left:33.40px;top:347.20px" width="13.4" height="13.4" viewBox="0 0 16 16"><path d="M6.7 1.3L8 3.1L9.3 1.3A7 7 0 1 1 6.7 1.3Z" fill="#f6f6fc" stroke="#3a3a3a" stroke-width="1.2" stroke-linejoin="round"/><g fill="#1c1c1c"><circle cx="4" cy="7.2" r="1"/><circle cx="12" cy="7.2" r="1"/><circle cx="5" cy="10.9" r="1"/><circle cx="11" cy="10.9" r="1"/><circle cx="8" cy="12.6" r="1"/></g></svg>
<span class="t tree" style="left:50.20px;top:349.45px">943 Ch30(SCS) 0dB</span>
<div class="a" style="left:24.70px;top:368.40px;width:8.6px;height:0.9px;background:#d2d2c4"></div>
<svg style="left:33.40px;top:361.60px" width="13.4" height="13.4" viewBox="0 0 16 16"><path d="M6.7 1.3L8 3.1L9.3 1.3A7 7 0 1 1 6.7 1.3Z" fill="#f6f6fc" stroke="#3a3a3a" stroke-width="1.2" stroke-linejoin="round"/><g fill="#1c1c1c"><circle cx="4" cy="7.2" r="1"/><circle cx="12" cy="7.2" r="1"/><circle cx="5" cy="10.9" r="1"/><circle cx="11" cy="10.9" r="1"/><circle cx="8" cy="12.6" r="1"/></g></svg>
<span class="t tree" style="left:50.20px;top:363.85px">944 Ch30(SCS) -2dB</span>
<div class="a" style="left:24.70px;top:382.80px;width:8.6px;height:0.9px;background:#d2d2c4"></div>
<svg style="left:33.40px;top:376.00px" width="13.4" height="13.4" viewBox="0 0 16 16"><path d="M6.7 1.3L8 3.1L9.3 1.3A7 7 0 1 1 6.7 1.3Z" fill="#f6f6fc" stroke="#3a3a3a" stroke-width="1.2" stroke-linejoin="round"/><g fill="#1c1c1c"><circle cx="4" cy="7.2" r="1"/><circle cx="12" cy="7.2" r="1"/><circle cx="5" cy="10.9" r="1"/><circle cx="11" cy="10.9" r="1"/><circle cx="8" cy="12.6" r="1"/></g></svg>
<span class="t tree" style="left:50.20px;top:378.25px">945 Ch30(SCS) -5dB</span>
<div class="a" style="left:24.70px;top:397.20px;width:8.6px;height:0.9px;background:#d2d2c4"></div>
<svg style="left:33.40px;top:390.40px" width="13.4" height="13.4" viewBox="0 0 16 16"><path d="M6.7 1.3L8 3.1L9.3 1.3A7 7 0 1 1 6.7 1.3Z" fill="#f6f6fc" stroke="#3a3a3a" stroke-width="1.2" stroke-linejoin="round"/><g fill="#1c1c1c"><circle cx="4" cy="7.2" r="1"/><circle cx="12" cy="7.2" r="1"/><circle cx="5" cy="10.9" r="1"/><circle cx="11" cy="10.9" r="1"/><circle cx="8" cy="12.6" r="1"/></g></svg>
<span class="t tree" style="left:50.20px;top:392.65px">946 Ch30(SCS) -7dB</span>
<div class="a" style="left:24.70px;top:411.60px;width:8.6px;height:0.9px;background:#d2d2c4"></div>
<svg style="left:33.40px;top:404.80px" width="13.4" height="13.4" viewBox="0 0 16 16"><path d="M6.7 1.3L8 3.1L9.3 1.3A7 7 0 1 1 6.7 1.3Z" fill="#f6f6fc" stroke="#3a3a3a" stroke-width="1.2" stroke-linejoin="round"/><g fill="#1c1c1c"><circle cx="4" cy="7.2" r="1"/><circle cx="12" cy="7.2" r="1"/><circle cx="5" cy="10.9" r="1"/><circle cx="11" cy="10.9" r="1"/><circle cx="8" cy="12.6" r="1"/></g></svg>
<span class="t tree" style="left:50.20px;top:407.05px">947 Ch30(SCS) -10dB</span>
<div class="a" style="left:24.70px;top:426.00px;width:8.6px;height:0.9px;background:#d2d2c4"></div>
<svg style="left:33.40px;top:419.20px" width="13.4" height="13.4" viewBox="0 0 16 16"><path d="M6.7 1.3L8 3.1L9.3 1.3A7 7 0 1 1 6.7 1.3Z" fill="#f6f6fc" stroke="#3a3a3a" stroke-width="1.2" stroke-linejoin="round"/><g fill="#1c1c1c"><circle cx="4" cy="7.2" r="1"/><circle cx="12" cy="7.2" r="1"/><circle cx="5" cy="10.9" r="1"/><circle cx="11" cy="10.9" r="1"/><circle cx="8" cy="12.6" r="1"/></g></svg>
<span class="t tree" style="left:50.20px;top:421.45px">975 Ch30(SCS) -30dB</span>
<div class="a" style="left:24.70px;top:440.40px;width:8.6px;height:0.9px;background:#d2d2c4"></div>
<svg style="left:33.40px;top:433.60px" width="13.4" height="13.4" viewBox="0 0 16 16"><path d="M6.7 1.3L8 3.1L9.3 1.3A7 7 0 1 1 6.7 1.3Z" fill="#f6f6fc" stroke="#3a3a3a" stroke-width="1.2" stroke-linejoin="round"/><g fill="#1c1c1c"><circle cx="4" cy="7.2" r="1"/><circle cx="12" cy="7.2" r="1"/><circle cx="5" cy="10.9" r="1"/><circle cx="11" cy="10.9" r="1"/><circle cx="8" cy="12.6" r="1"/></g></svg>
<span class="t tree" style="left:50.20px;top:435.85px">948 AUX1 OFF</span>
<div class="a" style="left:24.70px;top:454.80px;width:8.6px;height:0.9px;background:#d2d2c4"></div>
<svg style="left:33.40px;top:448.00px" width="13.4" height="13.4" viewBox="0 0 16 16"><path d="M6.7 1.3L8 3.1L9.3 1.3A7 7 0 1 1 6.7 1.3Z" fill="#f6f6fc" stroke="#3a3a3a" stroke-width="1.2" stroke-linejoin="round"/><g fill="#1c1c1c"><circle cx="4" cy="7.2" r="1"/><circle cx="12" cy="7.2" r="1"/><circle cx="5" cy="10.9" r="1"/><circle cx="11" cy="10.9" r="1"/><circle cx="8" cy="12.6" r="1"/></g></svg>
<span class="t tree" style="left:50.20px;top:450.25px">949 AUX1 ON</span>
<div class="a" style="left:28.60px;top:469.20px;width:5px;height:0.9px;background:#d2d2c4"></div>
<div class="a" style="left:21.50px;top:466.40px;width:7.4px;height:7.4px;box-sizing:border-box;border:0.9px solid #a9b1b8;border-radius:1.2px;background:linear-gradient(135deg,#fff,#e2e6ea)"></div>
<div class="a" style="left:23.30px;top:469.70px;width:3.8px;height:0.9px;background:#5c6b7c"></div>
<svg style="left:33.40px;top:464.10px" width="13.4" height="10.8" viewBox="0 0 17 15" preserveAspectRatio="none"><path d="M1.2 13.4V3.2C1.2 2.3 1.8 1.7 2.7 1.7H6.1L7.6 3.3H13.6C14.4 3.3 14.9 3.8 14.9 4.6V5.4" fill="#f0dd8c" stroke="#bb992f" stroke-width="1"/><path d="M1.2 13.6V6.6C1.2 5.9 1.7 5.4 2.4 5.4H14.9C15.6 5.4 16 5.9 16 6.6V12.2C16 13 15.5 13.6 14.7 13.6Z" fill="#ebcb5b" stroke="#b08c25" stroke-width="1"/><path d="M2.2 6.6H15" stroke="#f8eaa6" stroke-width="1"/></svg>
<span class="t tree" style="left:50.20px;top:464.65px">950 Rufe 953 (Ch1-4 -8dB)</span>
<div class="a" style="left:39.60px;top:483.60px;width:9.2px;height:0.9px;background:#d2d2c4"></div>
<svg style="left:48.60px;top:477.00px" width="13.4" height="11.8" viewBox="0 0 16 14"><path d="M0.6 1.7C5 1.3 8.3 3 8.3 5.7C8.3 8.5 5 10.2 1.4 10.6" fill="none" stroke="#35606f" stroke-width="1.35"/><path d="M1.2 8.6L1 10.8L3.2 11.4" fill="none" stroke="#35606f" stroke-width="1.2"/><ellipse cx="11.7" cy="6" rx="2.9" ry="4.1" fill="#dcf1fb" stroke="#4f97bd" stroke-width="1.25"/><path d="M12.4 8.6L14.9 11.2" stroke="#4f97bd" stroke-width="1.25"/></svg>
<span class="t tree" style="left:65.90px;top:479.05px;transform:scaleX(.805)">&lt;1&gt; Rufe 953 (Ch1 -8dB)</span>
<div class="a" style="left:39.60px;top:498.00px;width:9.2px;height:0.9px;background:#d2d2c4"></div>
<svg style="left:48.60px;top:491.40px" width="13.4" height="11.8" viewBox="0 0 16 14"><path d="M0.6 1.7C5 1.3 8.3 3 8.3 5.7C8.3 8.5 5 10.2 1.4 10.6" fill="none" stroke="#35606f" stroke-width="1.35"/><path d="M1.2 8.6L1 10.8L3.2 11.4" fill="none" stroke="#35606f" stroke-width="1.2"/><ellipse cx="11.7" cy="6" rx="2.9" ry="4.1" fill="#dcf1fb" stroke="#4f97bd" stroke-width="1.25"/><path d="M12.4 8.6L14.9 11.2" stroke="#4f97bd" stroke-width="1.25"/></svg>
<span class="t tree" style="left:65.90px;top:493.45px;transform:scaleX(.805)">&lt;2&gt; Rufe 954 (Ch2 -8dB)</span>
<div class="a" style="left:39.60px;top:512.40px;width:9.2px;height:0.9px;background:#d2d2c4"></div>
<svg style="left:48.60px;top:505.80px" width="13.4" height="11.8" viewBox="0 0 16 14"><path d="M0.6 1.7C5 1.3 8.3 3 8.3 5.7C8.3 8.5 5 10.2 1.4 10.6" fill="none" stroke="#35606f" stroke-width="1.35"/><path d="M1.2 8.6L1 10.8L3.2 11.4" fill="none" stroke="#35606f" stroke-width="1.2"/><ellipse cx="11.7" cy="6" rx="2.9" ry="4.1" fill="#dcf1fb" stroke="#4f97bd" stroke-width="1.25"/><path d="M12.4 8.6L14.9 11.2" stroke="#4f97bd" stroke-width="1.25"/></svg>
<span class="t tree" style="left:65.90px;top:507.85px;transform:scaleX(.805)">&lt;3&gt; Rufe 955 (Ch3 -8dB)</span>
<div class="a" style="left:39.60px;top:526.80px;width:9.2px;height:0.9px;background:#d2d2c4"></div>
<svg style="left:48.60px;top:520.20px" width="13.4" height="11.8" viewBox="0 0 16 14"><path d="M0.6 1.7C5 1.3 8.3 3 8.3 5.7C8.3 8.5 5 10.2 1.4 10.6" fill="none" stroke="#35606f" stroke-width="1.35"/><path d="M1.2 8.6L1 10.8L3.2 11.4" fill="none" stroke="#35606f" stroke-width="1.2"/><ellipse cx="11.7" cy="6" rx="2.9" ry="4.1" fill="#dcf1fb" stroke="#4f97bd" stroke-width="1.25"/><path d="M12.4 8.6L14.9 11.2" stroke="#4f97bd" stroke-width="1.25"/></svg>
<span class="t tree" style="left:65.90px;top:522.25px;transform:scaleX(.805)">&lt;4&gt; Rufe 956 (Ch4 -8dB)</span>
<div class="a" style="left:39.60px;top:541.20px;width:9.2px;height:0.9px;background:#d2d2c4"></div>
<svg style="left:48.60px;top:534.60px" width="13.4" height="11.8" viewBox="0 0 16 14"><path d="M0.6 1.7C5 1.3 8.3 3 8.3 5.7C8.3 8.5 5 10.2 1.4 10.6" fill="none" stroke="#35606f" stroke-width="1.35"/><path d="M1.2 8.6L1 10.8L3.2 11.4" fill="none" stroke="#35606f" stroke-width="1.2"/><ellipse cx="11.7" cy="6" rx="2.9" ry="4.1" fill="#dcf1fb" stroke="#4f97bd" stroke-width="1.25"/><path d="M12.4 8.6L14.9 11.2" stroke="#4f97bd" stroke-width="1.25"/></svg>
<span class="t tree" style="left:65.90px;top:536.65px;transform:scaleX(.805)">&lt;5&gt; Rufe 957 (Ch5 -8dB)</span>
<div class="a" style="left:24.70px;top:555.60px;width:8.6px;height:0.9px;background:#d2d2c4"></div>
<svg style="left:33.40px;top:549.00px" width="13.4" height="11.8" viewBox="0 0 16 14"><path d="M0.6 1.7C5 1.3 8.3 3 8.3 5.7C8.3 8.5 5 10.2 1.4 10.6" fill="none" stroke="#35606f" stroke-width="1.35"/><path d="M1.2 8.6L1 10.8L3.2 11.4" fill="none" stroke="#35606f" stroke-width="1.2"/><ellipse cx="11.7" cy="6" rx="2.9" ry="4.1" fill="#dcf1fb" stroke="#4f97bd" stroke-width="1.25"/><path d="M12.4 8.6L14.9 11.2" stroke="#4f97bd" stroke-width="1.25"/></svg>
<span class="t tree" style="left:50.20px;top:551.05px">968 Rufe 927 (DCA1 0dB)</span>
<svg style="left:33.40px;top:563.20px" width="13.4" height="13.4" viewBox="0 0 16 16"><path d="M6.7 1.3L8 3.1L9.3 1.3A7 7 0 1 1 6.7 1.3Z" fill="#f6f6fc" stroke="#3a3a3a" stroke-width="1.2" stroke-linejoin="round"/></svg>
</div>
<!-- cue properties -->
<div class="a " style="left:491.2px;top:81.5px;width:529.8px;height:136.1px;background:#86e250;box-sizing:border-box;border:solid #6f9a58;border-width:.7px 1px 1px 0"></div>
<div class="a " style="left:491.3px;top:82.1px;width:513.7px;height:14.3px;background:#a0451f"></div>
<span class="t " style="left:494.6px;top:85.9px;color:#eec173;transform:scaleX(.81)">Cueeigenschaften</span>
<div class="a " style="left:773.8px;top:82.8px;width:101px;height:13.2px;background:#ffff00"></div>
<span class="tc " style="left:704.3px;width:240px;top:85.2px;color:#3a3a10">! ausgeblendet !</span>
<span class="t b" style="left:511.9px;top:101.6px;color:#804a05;font-size:11.6px;transform:scaleX(.88)">Cue</span>
<div class="a " style="left:535.2px;top:97.9px;width:55.8px;height:18.4px;background:#fff"></div>
<span class="t b" style="left:539.2px;top:102.0px;font-size:11.6px;color:#111;transform:scaleX(.84)">941</span>
<span class="t br" style="left:614.7px;top:102.2px;">Beschreibung</span>
<div class="a " style="left:670.4px;top:97.2px;width:235.6px;height:16px;background:#fff"></div>
<span class="t b" style="left:674.6px;top:100.5px;font-size:10.6px;color:#111;transform:scaleX(.84)">Ch4 BassBoost</span>
<span class="t br" style="left:513.2px;top:122.6px;transform:scaleX(.8)">Seite</span>
<div class="a " style="left:535.4px;top:118.2px;width:35.6px;height:15.8px;background:#fff"></div>
<span class="t br" style="left:577.6px;top:122.8px;">MIDI/DMX Cue</span>
<div class="a " style="left:640px;top:118.2px;width:35.6px;height:15.8px;background:#fff"></div>
<span class="t br" style="left:682.4px;top:118.9px;">wann erforderlich</span>
<div class="a " style="left:752.4px;top:115px;width:153.6px;height:15.6px;background:#fff"></div>
<div class="a " style="left:918px;top:99px;width:9.6px;height:9.6px;box-sizing:border-box;border:1px solid #8e9aa4;background:linear-gradient(135deg,#dfe3e6,#fff 70%)"></div>
<svg style="left:919.2px;top:100px" width="8" height="8" viewBox="0 0 8 8"><path d="M1 3.6L3 6.4L7 0.8" fill="none" stroke="#3f4aa8" stroke-width="1.5"/></svg>
<div class="a " style="left:918px;top:112.2px;width:9.6px;height:9.6px;box-sizing:border-box;border:1px solid #8e9aa4;background:linear-gradient(135deg,#dfe3e6,#fff 70%)"></div>
<div class="a " style="left:918px;top:124.6px;width:9.6px;height:9.6px;box-sizing:border-box;border:1px solid #8e9aa4;background:linear-gradient(135deg,#dfe3e6,#fff 70%)"></div>
<svg style="left:919.2px;top:125.6px" width="8" height="8" viewBox="0 0 8 8"><path d="M1 3.6L3 6.4L7 0.8" fill="none" stroke="#3f4aa8" stroke-width="1.5"/></svg>
<div class="a" style="left:930.3px;top:100.6px;width:100px;height:9.0px;overflow:hidden"><span class="t br" style="left:0;top:0">eingeschaltet</span></div>
<div class="a" style="left:930.3px;top:113.6px;width:100px;height:9.0px;overflow:hidden"><span class="t br" style="left:0;top:0">exclusiv-Cue</span></div>
<div class="a" style="left:930.3px;top:126.4px;width:100px;height:9.0px;overflow:hidden"><span class="t br" style="left:0;top:0">Warnung vor dem</span></div>
<div class="a" style="left:497.4px;top:139.9px;width:200px;height:9.1px;overflow:hidden"><span class="t br" style="left:0;top:0">Aktivierung (wie der Cue gestartet wird)</span></div>
<div class="a sel" style="left:501px;top:149.8px;width:93.4px;height:16.6px;"></div>
<span class="t " style="left:504.6px;top:155.2px;color:#111">Call Cue</span>
<svg style="left:584.6px;top:156.70000000000002px" width="5.6" height="3.4" viewBox="0 0 10 10" preserveAspectRatio="none"><path d="M0 0H10L5 10Z" fill="#111"/></svg>
<span class="tr br" style="left:595.8px;width:200px;top:137.2px;">Cue ein/ausblenden</span>
<div class="a sel" style="left:801px;top:132.6px;width:105px;height:16px;"></div>
<span class="t " style="left:804.6px;top:137.8px;color:#111">Cue ausblenden</span>
<svg style="left:896.6px;top:138.9px" width="5.6" height="3.4" viewBox="0 0 10 10" preserveAspectRatio="none"><path d="M0 0H10L5 10Z" fill="#111"/></svg>
<div class="a " style="left:792.4px;top:169px;width:195.6px;height:38px;box-sizing:border-box;border:1px solid #5f9f3c"></div>
<span class="t br" style="left:799.8px;top:176.0px;">'Standby'</span>
<div class="a sel" style="left:800.2px;top:185.4px;width:179.8px;height:16px;"></div>
<svg style="left:970.4000000000001px;top:191.9px" width="5.6" height="3.4" viewBox="0 0 10 10" preserveAspectRatio="none"><path d="M0 0H10L5 10Z" fill="#111"/></svg>
<!-- subcue panel -->
<div class="a " style="left:491px;top:217.7px;width:533px;height:6.4px;background:#fcfcfc"></div>
<div class="a " style="left:491.2px;top:223.9px;width:529.8px;height:600px;background:#86e250;box-sizing:border-box;border:solid #6f9a58;border-width:0 1px 0 0"></div>
<div class="a " style="left:489.1px;top:221px;width:532.1px;height:1.4px;background:#9c9ea2"></div>
<div class="a " style="left:491.3px;top:224px;width:513.7px;height:13.6px;background:#000"></div>
<span class="t b" style="left:494.9px;top:226.6px;color:#86e250;font-size:9.9px;transform:scaleX(.775)">Subcue 941 &lt;3&gt; : Gerätesteuerung</span>
<div class="a" style="left:491.6px;top:244px;width:90px;height:13px;overflow:hidden"><span class="tr dg" style="left:-118.4px;width:200px;top:1.2px">Subcue-Beschreibung</span></div>
<div class="a " style="left:577.6px;top:241.4px;width:199.6px;height:15.8px;background:#fff"></div>
<span class="t " style="left:582.3px;top:246.0px;color:#111">Ch4 LowF 90Hz</span>
<span class="tr dg" style="left:623.3px;width:200px;top:245.8px;">Rel. Start</span>
<div class="a " style="left:827.7px;top:241.4px;width:49.2px;height:15.8px;background:#fff"></div>
<div class="a sel" style="left:876.9px;top:241.2px;width:127.6px;height:16px;"></div>
<svg style="left:995.6px;top:247.9px" width="5.6" height="3.4" viewBox="0 0 10 10" preserveAspectRatio="none"><path d="M0 0H10L5 10Z" fill="#111"/></svg>
<span class="tr dg" style="left:623.7px;width:200px;top:271.0px;">Gerätesteuerungs</span>
<div class="a sel" style="left:828.2px;top:265.8px;width:119.6px;height:16.6px;"></div>
<span class="t " style="left:831.7px;top:271.4px;color:#111">Ton - Yamaha</span>
<svg style="left:938.4000000000001px;top:272.1px" width="5.6" height="3.4" viewBox="0 0 10 10" preserveAspectRatio="none"><path d="M0 0H10L5 10Z" fill="#111"/></svg>
<span class="tr dg" style="left:623.7px;width:200px;top:294.4px;">Message Typ</span>
<div class="a sel" style="left:828.2px;top:289px;width:143.6px;height:16.6px;"></div>
<span class="t " style="left:831.7px;top:294.6px;color:#111">MIDI Control Change</span>
<svg style="left:962.2px;top:295.5px" width="5.6" height="3.4" viewBox="0 0 10 10" preserveAspectRatio="none"><path d="M0 0H10L5 10Z" fill="#111"/></svg>
<span class="tr dg" style="left:623.7px;width:200px;top:311.1px;">Kanal</span>
<div class="a " style="left:828.2px;top:306.3px;width:63.2px;height:16px;background:#fff"></div>
<span class="t " style="left:831.7px;top:311.1px;color:#111">2</span>
<svg style="left:882.0px;top:312.8px" width="5.6" height="3.4" viewBox="0 0 10 10" preserveAspectRatio="none"><path d="M0 0H10L5 10Z" fill="#111"/></svg>
<span class="tr dg" style="left:623.7px;width:200px;top:327.8px;">Steuerung #</span>
<div class="a " style="left:828.2px;top:323px;width:63.2px;height:16px;background:#fff"></div>
<span class="t " style="left:831.7px;top:327.8px;color:#111">98  (62H)</span>
<svg style="left:882.0px;top:329.5px" width="5.6" height="3.4" viewBox="0 0 10 10" preserveAspectRatio="none"><path d="M0 0H10L5 10Z" fill="#111"/></svg>
<span class="tr dg" style="left:623.7px;width:200px;top:344.4px;">Wert</span>
<div class="a " style="left:828.2px;top:339.6px;width:63.2px;height:16px;background:#fff"></div>
<span class="t " style="left:831.7px;top:344.4px;color:#111">3  (03H)</span>
<svg style="left:882.0px;top:346.1px" width="5.6" height="3.4" viewBox="0 0 10 10" preserveAspectRatio="none"><path d="M0 0H10L5 10Z" fill="#111"/></svg>
<div class="a " style="left:494.2px;top:280.6px;width:24px;height:126.6px;background:#f0f0f0"></div>
<div class="lbtn" style="top:283.7px;border-color:#cfcfcf;background:linear-gradient(#f8f8f8,#eee)"><svg style="left:-0.4px;top:-0.9px" width="16" height="16" viewBox="0 0 16 16"><path d="M8 3.6L11.6 7.8H9.2V12H6.8V7.8H4.4Z" fill="#bdbdbd"/></svg></div>
<div class="lbtn" style="top:304.9px;"><svg style="left:-0.4px;top:-0.9px" width="16" height="16" viewBox="0 0 16 16"><path d="M8 12.4L11.6 8.2H9.2V4H6.8V8.2H4.4Z" fill="#111"/></svg></div>
<div class="lbtn" style="top:325.3px;"><svg style="left:-0.4px;top:-0.9px" width="16" height="16" viewBox="0 0 16 16"><path d="M4 8H12M8 4V12" stroke="#111" stroke-width="2.2"/></svg></div>
<div class="lbtn" style="top:345.7px;"><svg style="left:-0.4px;top:-0.9px" width="16" height="16" viewBox="0 0 16 16"><path d="M4 8H12" stroke="#111" stroke-width="2.2"/></svg></div>
<div class="a " style="left:521.2px;top:261.2px;width:211.8px;height:146px;background:#fff;box-sizing:border-box;border:1px solid #c9d4c2"></div>
<div class="a " style="left:542.2px;top:262.2px;width:0.9px;height:144px;background:#e9e9e9"></div>
<div class="a " style="left:522.2px;top:297.79999999999995px;width:196px;height:0.9px;background:#efefef"></div>
<div class="a " style="left:522.2px;top:313.79999999999995px;width:196px;height:0.9px;background:#efefef"></div>
<div class="a " style="left:522.2px;top:329.79999999999995px;width:196px;height:0.9px;background:#efefef"></div>
<div class="a " style="left:522.2px;top:345.79999999999995px;width:196px;height:0.9px;background:#efefef"></div>
<div class="a " style="left:522.2px;top:361.79999999999995px;width:196px;height:0.9px;background:#efefef"></div>
<div class="a " style="left:522.2px;top:377.79999999999995px;width:196px;height:0.9px;background:#efefef"></div>
<div class="a " style="left:522.2px;top:393.79999999999995px;width:196px;height:0.9px;background:#efefef"></div>
<span class="t " style="left:527.3px;top:267.8px;color:#111;font-size:10px;transform:scaleX(.87)">#</span>
<span class="t " style="left:547.2px;top:267.8px;color:#111;font-size:10px;transform:scaleX(.87)">Steuerungs Message</span>
<div class="a " style="left:525.6px;top:282.4px;width:192px;height:14.4px;background:#3399ff"></div>
<div class="a " style="left:542.2px;top:282.4px;width:1px;height:14.4px;background:#fff"></div>
<span class="t " style="left:527.8px;top:286.3px;color:#fff;font-size:10px;transform:scaleX(.87)">1</span>
<span class="t " style="left:547.2px;top:286.3px;color:#fff;font-size:10px;transform:scaleX(.87)">Ctrl.Chg.  Ch 2  Ctrl 98(62H)  Val 3(03H)</span>
<span class="t " style="left:527.8px;top:302.3px;color:#111;font-size:10px;transform:scaleX(.87)">2</span>
<span class="t " style="left:547.2px;top:302.3px;color:#111;font-size:10px;transform:scaleX(.87)">Ctrl.Chg.  Ch 2  Ctrl 99(63H)  Val 40(28H)</span>
<span class="t " style="left:527.8px;top:318.3px;color:#111;font-size:10px;transform:scaleX(.87)">3</span>
<span class="t " style="left:547.2px;top:318.3px;color:#111;font-size:10px;transform:scaleX(.87)">Ctrl.Chg.  Ch 2  Ctrl 6(06H)  Val 27(1BH)</span>
<span class="t " style="left:527.8px;top:334.3px;color:#111;font-size:10px;transform:scaleX(.87)">4</span>
<span class="t " style="left:547.2px;top:334.3px;color:#111;font-size:10px;transform:scaleX(.87)">Ctrl.Chg.  Ch 2  Ctrl 38(26H)  Val 78(4EH)</span>
<span class="t " style="left:527.8px;top:350.3px;color:#111;font-size:10px;transform:scaleX(.87)">5</span>
<span class="t " style="left:527.8px;top:366.3px;color:#111;font-size:10px;transform:scaleX(.87)">6</span>
<span class="t " style="left:527.8px;top:382.3px;color:#111;font-size:10px;transform:scaleX(.87)">7</span>
<span class="t " style="left:527.8px;top:398.3px;color:#111;font-size:10px;transform:scaleX(.87)">8</span>
<div class="a " style="left:719px;top:262.2px;width:13px;height:144px;background:#f0f0f0"></div>
<svg style="left:723.0px;top:267.59999999999997px" width="5.2" height="3.2" viewBox="0 0 10 10" preserveAspectRatio="none"><path d="M0 10H10L5 0Z" fill="#333"/></svg>
<svg style="left:723.0px;top:398.2px" width="5.2" height="3.2" viewBox="0 0 10 10" preserveAspectRatio="none"><path d="M0 0H10L5 10Z" fill="#333"/></svg>
<div class="a " style="left:719.6px;top:277px;width:11.8px;height:49.4px;box-sizing:border-box;border:1px solid #979797;border-radius:2px;background:linear-gradient(to right,#f6f6f6,#e2e2e2 50%,#cfcfcf)"></div>
<div class="a " style="left:723px;top:299.4px;width:5px;height:0.9px;background:#7d7d7d"></div>
<div class="a " style="left:723px;top:301.6px;width:5px;height:0.9px;background:#7d7d7d"></div>
<div class="a " style="left:723px;top:303.8px;width:5px;height:0.9px;background:#7d7d7d"></div>
<svg style="left:600px;top:262px" width="62" height="102" viewBox="0 0 62 102"><ellipse cx="30.6" cy="52" rx="24.6" ry="44.6" fill="none" stroke="#c91c33" stroke-width="2.3" transform="rotate(2 30.6 52)"/></svg>
<span class="tr " style="left:477.79999999999995px;width:200px;top:433.2px;color:#0a2a0a;font-size:9.7px;transform:scaleX(.89)">Message (Hex)</span>
<div class="a " style="left:682px;top:430.8px;width:257.6px;height:14.4px;background:#f0f0f0"></div>
<span class="t " style="left:686.2px;top:433.3px;color:#111;font-size:9.6px;transform:scaleX(.88)">B1 62 03</span>
<div class="a " style="left:503px;top:476px;width:483px;height:81.2px;background:#808080"></div>
<div class="a " style="left:537.4px;top:485.4px;width:200.4px;height:19.2px;box-sizing:border-box;border:1px solid #707070;border-radius:2.5px;background:linear-gradient(#f4f4f4,#ebebeb 48%,#dcdcdc 52%,#d0d0d0);box-shadow:inset 0 0 0 1px #fafafa"></div>
<span class="tc " style="left:517.4px;width:240.4px;top:490.6px;color:#111;font-size:9.6px;transform:scaleX(.875)">Geräteteuerung testen (nur gewählte Message)</span>
<div class="a " style="left:751px;top:485.4px;width:200.4px;height:19.2px;box-sizing:border-box;border:1px solid #707070;border-radius:2.5px;background:linear-gradient(#f4f4f4,#ebebeb 48%,#dcdcdc 52%,#d0d0d0);box-shadow:inset 0 0 0 1px #fafafa"></div>
<span class="tc " style="left:731.0px;width:240.4px;top:490.6px;color:#111;font-size:9.6px;transform:scaleX(.875)">Geräteteuerung testen (alle Messages)</span>
<div class="a " style="left:1021.2px;top:81.4px;width:9px;height:746px;background:#f0f0f0"></div>
</div>
</div>
</body></html>
